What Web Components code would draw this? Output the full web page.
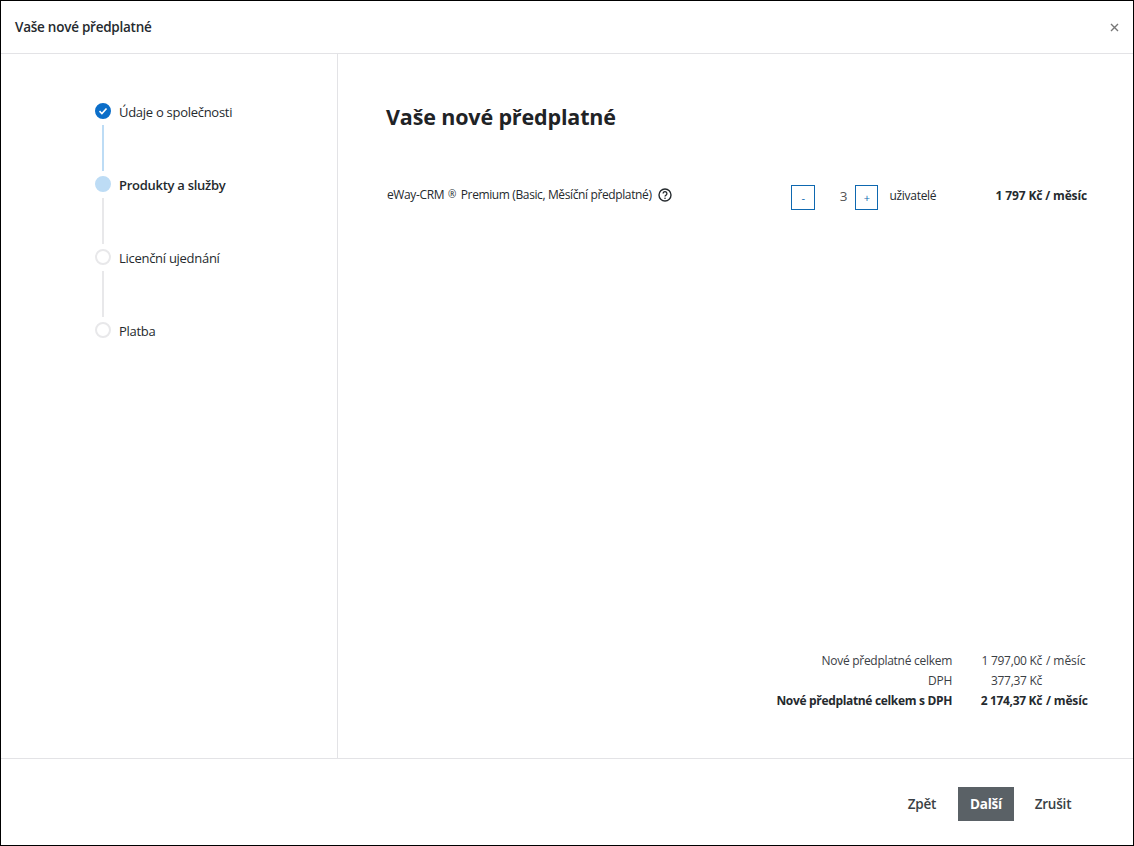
<!DOCTYPE html>
<html lang="cs">
<head>
<meta charset="utf-8">
<title>Vaše nové předplatné</title>
<style>
    html, body { margin: 0; height: 100%; background: #fff; }
    body { font-family: "Open Sans", "Noto Sans", sans-serif; color: #252a2e; }
</style>
</head>
<body>

<template id="dialog-tpl">
    <style>
        :host { display: flex; flex-direction: column; box-sizing: border-box; width: 1134px; height: 846px; border: 1px solid #000; background: #fff; }
        header { flex: none; height: 52px; display: flex; align-items: center; justify-content: space-between; padding: 0 14px; border-bottom: 1px solid #e3e3e6; font-size: 13.5px; font-weight: 600; letter-spacing: -0.25px; }
        header svg { display: block; }
        .body { flex: 1; display: flex; min-height: 0; }
        nav { flex: none; width: 337px; box-sizing: border-box; border-right: 1px solid #e3e3e6; padding: 49px 0 0 94px; }
        main { flex: 1; min-width: 0; }
        footer { flex: none; height: 87px; box-sizing: border-box; border-top: 1px solid #e3e3e6; display: flex; justify-content: flex-end; align-items: flex-start; padding: 28px 51px 0 0; }
    </style>
    <header><span><slot name="title"></slot></span>
        <svg width="9" height="9" viewBox="0 0 9 9"><path d="M1 1l7 7M8 1L1 8" stroke="#777" stroke-width="1.4" fill="none"/></svg>
    </header>
    <div class="body">
        <nav><slot name="nav"></slot></nav>
        <main><slot></slot></main>
    </div>
    <footer><slot name="footer"></slot></footer>
</template>

<template id="step-tpl">
    <style>
        :host { display: block; height: 73px; font-size: 13px; letter-spacing: -0.28px; }
        :host([state="current"]) { font-weight: 600; }
        .row { display: flex; align-items: center; gap: 8px; height: 16px; }
        .dot { flex: none; box-sizing: border-box; width: 16px; height: 16px; border-radius: 50%; border: 2px solid #e8e8ea; display: block; }
        :host([state="done"]) .dot { background: #0b6ec9; border-color: #0b6ec9; }
        :host([state="current"]) .dot { background: #bddcf5; border-color: #bddcf5; }
        svg { display: none; }
        :host([state="done"]) svg { display: block; }
        .line { width: 2px; height: 46px; margin: 6px 0 0 7px; background: #e8e8ea; }
        :host([state="done"]) .line { background: #bddcf5; }
        :host([last]) .line { display: none; }
        .label { position: relative; top: 1px; }
    </style>
    <div class="row">
        <span class="dot"><svg width="12" height="12" viewBox="0 0 12 12"><path d="M2.5 6.2l2.4 2.3 4.6-5" stroke="#fff" stroke-width="1.6" fill="none"/></svg></span>
        <span class="label"><slot></slot></span>
    </div>
    <div class="line"></div>
</template>

<template id="order-tpl">
    <style>
        :host { display: flex; flex-direction: column; height: 100%; box-sizing: border-box; padding: 47px 46px 47px 48px; }
        h1 { margin: 0; font-size: 21.5px; line-height: 32px; font-weight: 700; letter-spacing: -0.15px; color: #1f2326; }
        .lines { flex: 1; padding-top: 52px; }
        .totals { display: flex; flex-direction: column; }
    </style>
    <h1><slot name="heading"></slot></h1>
    <div class="lines"><slot></slot></div>
    <div class="totals"><slot name="totals"></slot></div>
</template>

<template id="product-tpl">
    <style>
        :host { display: flex; align-items: center; height: 25px; font-size: 12px; letter-spacing: -0.28px; }
        .name { display: flex; align-items: center; gap: 6px; width: 406px; position: relative; top: -3px; margin-left: 1px; letter-spacing: -0.38px; }
        .qty { display: flex; align-items: center; width: 205px; }
        button { box-sizing: border-box; height: 25px; padding: 0; border: 1px solid #0e68b0; background: #fff; color: #0e68b0; font: inherit; font-size: 11px; }
        .minus { width: 24px; }
        .plus { width: 23px; }
        .count { width: 40px; text-align: center; font-size: 13.5px; color: #555; padding-left: 16px; box-sizing: border-box; position: relative; top: -2px; }
        .unit { margin-left: 11px; position: relative; top: -2px; }
        .price { margin-left: auto; font-weight: 700; font-size: 12px; letter-spacing: -0.14px; white-space: nowrap; position: relative; top: -2px; }
        svg { display: block; flex: none; }
    </style>
    <span class="name"><span><slot name="name"></slot></span>
        <svg width="14" height="14" viewBox="0 0 14 14"><circle cx="7" cy="7" r="6" fill="none" stroke="#252a2e" stroke-width="1.4"/><path d="M5.1 5.5a1.9 1.9 0 1 1 2.9 1.6c-.7.4-1 .8-1 1.5" fill="none" stroke="#252a2e" stroke-width="1.3"/><circle cx="7" cy="10.3" r=".8" fill="#252a2e"/></svg>
    </span>
    <span class="qty">
        <button class="minus">-</button>
        <span class="count"><slot name="count"></slot></span>
        <button class="plus">+</button>
        <span class="unit"><slot name="unit"></slot></span>
    </span>
    <span class="price"><slot name="price"></slot></span>
</template>

<template id="total-tpl">
    <style>
        :host { display: grid; grid-template-columns: 566px 90px 1fr; height: 20px; line-height: 20px; font-size: 12px; letter-spacing: -0.28px; color: #3b4045; white-space: nowrap; }
        :host([strong]) { font-weight: 700; color: #252a2e; letter-spacing: -0.33px; }
        .label, .value { text-align: right; }
        .per { padding-left: 4px; letter-spacing: -0.08px; }
        :host([strong]) .per { letter-spacing: -0.15px; }
    </style>
    <span class="label"><slot name="label"></slot></span>
    <span class="value"><slot name="value"></slot></span>
    <span class="per"><slot name="per"></slot></span>
</template>

<template id="button-tpl">
    <style>
        :host { display: inline-flex; align-items: center; justify-content: center; height: 34px; font-size: 13.5px; font-weight: 600; color: #3a3f44; letter-spacing: -0.2px; }
        :host([primary]) { background: #5a6166; color: #fff; font-weight: 700; }
    </style>
    <slot></slot>
</template>

<sub-dialog>
    <span slot="title">Vaše nové předplatné</span>
    <sub-step slot="nav" state="done">Údaje o společnosti</sub-step>
    <sub-step slot="nav" state="current">Produkty a služby</sub-step>
    <sub-step slot="nav">Licenční ujednání</sub-step>
    <sub-step slot="nav" last>Platba</sub-step>

    <sub-order>
        <span slot="heading">Vaše nové předplatné</span>
        <sub-product>
            <span slot="name">eWay-CRM<span style="margin:0 2px 0 4px;font-size:10px;vertical-align:1px">®</span> Premium (Basic, Měsíční předplatné)</span>
            <span slot="count">3</span>
            <span slot="unit">uživatelé</span>
            <span slot="price">1 797 Kč / měsíc</span>
        </sub-product>
        <sub-total slot="totals"><span slot="label">Nové předplatné celkem</span><span slot="value">1 797,00 Kč</span><span slot="per">/ měsíc</span></sub-total>
        <sub-total slot="totals"><span slot="label">DPH</span><span slot="value">377,37 Kč</span></sub-total>
        <sub-total slot="totals" strong><span slot="label">Nové předplatné celkem s DPH</span><span slot="value">2 174,37 Kč</span><span slot="per">/ měsíc</span></sub-total>
    </sub-order>

    <sub-button slot="footer" style="width:56px">Zpět</sub-button>
    <sub-button slot="footer" primary style="width:56px;margin:0 10px 0 8px">Další</sub-button>
    <sub-button slot="footer" style="width:58px">Zrušit</sub-button>
</sub-dialog>

<script>
    // every element just clones its template into an open shadow root
    class TemplatedElement extends HTMLElement {
        constructor(id) {
            super();
            this.attachShadow({mode: "open"});
            this.shadowRoot.appendChild(document.getElementById(id).content.cloneNode(true));
        }
    }
    const parts = {
        "sub-dialog": "dialog-tpl",
        "sub-step": "step-tpl",
        "sub-order": "order-tpl",
        "sub-product": "product-tpl",
        "sub-total": "total-tpl",
        "sub-button": "button-tpl"
    };
    for (const [tag, id] of Object.entries(parts)) {
        customElements.define(tag, class extends TemplatedElement {
            constructor() { super(id); }
        });
    }
</script>
</body>
</html>
